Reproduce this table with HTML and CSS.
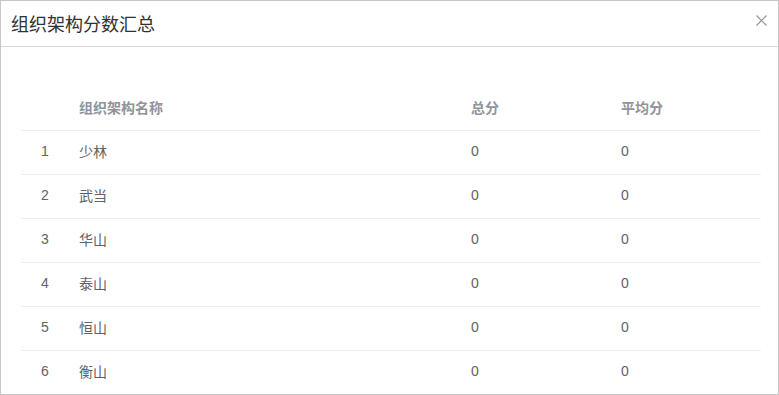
FILE: index.html
```html
<!DOCTYPE html>
<html lang="zh">
<head>
<meta charset="utf-8">
<link rel="stylesheet" href="styles.css">
</head>
<body>
<div class="dialog">
  <div class="dialog-header">
    <span class="dialog-title">组织架构分数汇总</span>
    <span class="close" aria-label="关闭">
      <svg width="11" height="11" viewBox="0 0 11 11"><path d="M0.5 0.5L10.5 10.5M10.5 0.5L0.5 10.5" stroke="#909399" stroke-width="1.2" fill="none"/></svg>
    </span>
  </div>
  <div class="dialog-body">
    <table class="table">
      <colgroup>
        <col class="c-idx"><col class="c-name"><col class="c-total"><col class="c-avg">
      </colgroup>
      <thead>
        <tr><th></th><th>组织架构名称</th><th>总分</th><th>平均分</th></tr>
      </thead>
      <tbody>
        <tr><td class="idx">1</td><td>少林</td><td>0</td><td>0</td></tr>
        <tr><td class="idx">2</td><td>武当</td><td>0</td><td>0</td></tr>
        <tr><td class="idx">3</td><td>华山</td><td>0</td><td>0</td></tr>
        <tr><td class="idx">4</td><td>泰山</td><td>0</td><td>0</td></tr>
        <tr><td class="idx">5</td><td>恒山</td><td>0</td><td>0</td></tr>
        <tr><td class="idx">6</td><td>衡山</td><td>0</td><td>0</td></tr>
      </tbody>
    </table>
  </div>
</div>
</body>
</html>
```
FILE: styles.css
```css
html, body {
  margin: 0;
  padding: 0;
  background: #fff;
}
body {
  font-family: "Liberation Sans", "Noto Sans CJK SC", sans-serif;
}
.dialog {
  width: 779px;
  height: 395px;
  box-sizing: border-box;
  border: 1px solid #c6c6c6;
  overflow: hidden;
  background: #fff;
}
.dialog-header {
  height: 45px;
  border-bottom: 1px solid #d8d8d8;
  display: flex;
  align-items: center;
  justify-content: space-between;
  padding: 0 10px 0 10px;
}
.dialog-title {
  font-size: 18px;
  color: #303133;
  font-family: "Noto Sans CJK SC", sans-serif;
  line-height: 24px;
  margin-top: -2px;
}
.close {
  display: flex;
  width: 11px;
  height: 11px;
  margin-top: -7px;
  margin-right: 1px;
}
.dialog-body {
  padding: 39px 17px 0 20px;
}
.table {
  width: 740px;
  border-collapse: collapse;
  table-layout: fixed;
  font-size: 14px;
}
.c-idx { width: 48px; }
.c-name { width: 392px; }
.c-total { width: 150px; }
.c-avg { width: 150px; }
.table th, .table td {
  height: 44px;
  box-sizing: border-box;
  padding: 0 10px 2px;
  text-align: left;
  border-bottom: 1px solid #ebeef5;
  font-family: "Liberation Sans", "Noto Sans CJK SC", sans-serif;
}
.table th {
  color: #909399;
  font-weight: bold;
}
.table td {
  color: #606266;
}
.table td.idx {
  text-align: center;
}
```
